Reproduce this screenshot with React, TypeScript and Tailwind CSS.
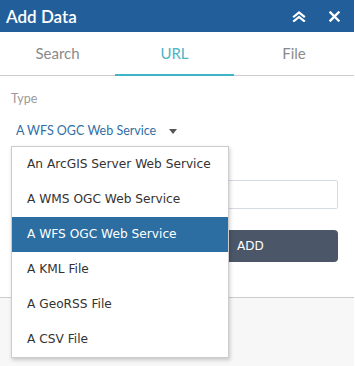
import React from "react";

const items = [
  "An ArcGIS Server Web Service",
  "A WMS OGC Web Service",
  "A WFS OGC Web Service",
  "A KML File",
  "A GeoRSS File",
  "A CSV File",
];

export default function App() {
  return (
    <div className="relative w-[354px] h-[366px] bg-white flex flex-col font-['Lato',sans-serif]">
      {/* Header */}
      <div className="h-[32px] bg-[#215e9a] flex items-center justify-between pl-[6px] pr-[14px] text-white">
        <span className="text-[17px] font-semibold leading-none">Add Data</span>
        <div className="flex items-center gap-[23px]">
          <svg width="14" height="11" viewBox="0 0 14 11" fill="none" stroke="white" strokeWidth="2.2" strokeLinecap="square">
            <path d="M2 5.5 L7 1.5 L12 5.5" />
            <path d="M2 10 L7 6 L12 10" />
          </svg>
          <svg width="11" height="11" viewBox="0 0 11 11" fill="none" stroke="white" strokeWidth="2.4" strokeLinecap="square">
            <path d="M1.5 1.5 L9.5 9.5 M9.5 1.5 L1.5 9.5" />
          </svg>
        </div>
      </div>
      {/* Tabs */}
      <div className="grid grid-cols-[115px_119px_1fr] h-[44px] text-[15px]">
        <div className="flex items-center justify-center border-b border-[#cccccc] text-[#8a8a8a] pb-[1px]">Search</div>
        <div className="flex items-center justify-center border-b-2 border-[#3fb4c6] text-[#4cb4c4] pt-[1px]">URL</div>
        <div className="flex items-center justify-center border-b border-[#cccccc] text-[#8a8a8a] pb-[1px]">File</div>
      </div>
      {/* Content */}
      <div className="flex-1 flex flex-col pl-[11px] pr-[16px]">
        <div className="mt-[15px] h-[16px] flex items-center text-[12.5px] text-[#9a9a9a]">Type</div>
        <div className="mt-[14px] h-[20px] flex items-center pl-[5px] text-[12.5px] text-[#2f6fa6]">
          <span>A WFS OGC Web Service</span>
          <svg className="ml-[13px]" width="8" height="5" viewBox="0 0 8 5">
            <path d="M0 0 L8 0 L4 5 Z" fill="#555" />
          </svg>
        </div>
        <div className="mt-[39px] h-[29px] border border-[#d5dbe5] rounded-[2px] bg-white" />
        <div className="mt-[21px] self-end w-[116px] h-[32px] rounded-[4px] bg-[#4b5668] text-white flex items-center pl-[15px] text-[12px] font-['DejaVu_Sans',sans-serif]">
          ADD
        </div>
      </div>
      {/* Footer */}
      <div className="h-[69px] border-t border-[#cccccc] bg-[#f7f7f7]" />

      {/* Dropdown menu */}
      <div className="absolute left-[11px] top-[146px] w-[218px] border border-[#cccccc] bg-white shadow-[1px_2px_4px_rgba(0,0,0,0.2)] font-['DejaVu_Sans',sans-serif] text-[12.2px]">
        {items.map((it, i) => (
          <div
            key={it}
            className={
              i === 2
                ? "h-[35px] flex items-center pl-[15px] bg-[#2c6ea2] text-white"
                : "h-[35px] flex items-center pl-[15px] text-[#333333]"
            }
          >
            {it}
          </div>
        ))}
      </div>
    </div>
  );
}
